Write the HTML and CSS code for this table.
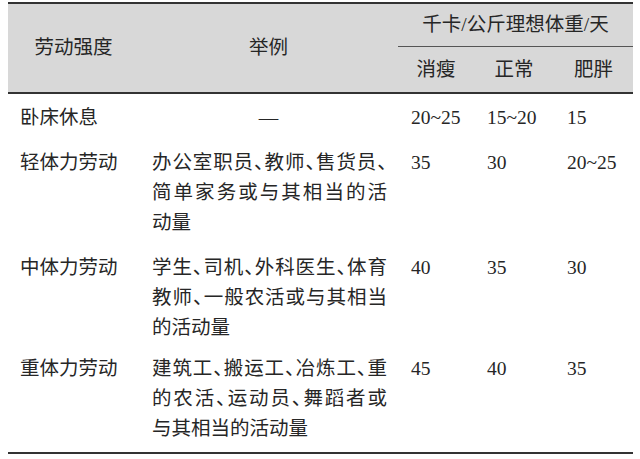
FILE: index.html
```html
<!DOCTYPE html>
<html lang="zh-CN">
<head>
<meta charset="utf-8">
<title>劳动强度与能量需要</title>
<link rel="stylesheet" href="styles.css">
</head>
<body>
<table class="energy">
  <colgroup>
    <col class="c-kind">
    <col class="c-ex">
    <col class="c-n1">
    <col class="c-n2">
    <col class="c-n3">
  </colgroup>
  <thead>
    <tr>
      <th rowspan="2" class="h-main">劳动强度</th>
      <th rowspan="2" class="h-main">举例</th>
      <th colspan="3" class="h-group">千卡/公斤理想体重/天</th>
    </tr>
    <tr>
      <th class="h-sub">消瘦</th>
      <th class="h-sub">正常</th>
      <th class="h-sub">肥胖</th>
    </tr>
  </thead>
  <tbody>
    <tr class="r-first">
      <td class="kind">卧床休息</td>
      <td class="ex dash">—</td>
      <td class="num">20~25</td>
      <td class="num">15~20</td>
      <td class="num">15</td>
    </tr>
    <tr>
      <td class="kind">轻体力劳动</td>
      <td class="ex">
        <span class="ln">办公室职员<span class="p">、</span>教师<span class="p">、</span>售货员<span class="p">、</span></span>
        <span class="ln">简单家务或与其相当的活</span>
        <span class="ln last">动量</span>
      </td>
      <td class="num">35</td>
      <td class="num">30</td>
      <td class="num">20~25</td>
    </tr>
    <tr class="r-third">
      <td class="kind">中体力劳动</td>
      <td class="ex">
        <span class="ln">学生<span class="p">、</span>司机<span class="p">、</span>外科医生<span class="p">、</span>体育</span>
        <span class="ln">教师<span class="p">、</span>一般农活或与其相当</span>
        <span class="ln last">的活动量</span>
      </td>
      <td class="num">40</td>
      <td class="num">35</td>
      <td class="num">30</td>
    </tr>
    <tr class="r-last">
      <td class="kind">重体力劳动</td>
      <td class="ex">
        <span class="ln">建筑工<span class="p">、</span>搬运工<span class="p">、</span>冶炼工<span class="p">、</span>重</span>
        <span class="ln">的农活<span class="p">、</span>运动员<span class="p">、</span>舞蹈者或</span>
        <span class="ln last">与其相当的活动量</span>
      </td>
      <td class="num">45</td>
      <td class="num">40</td>
      <td class="num">35</td>
    </tr>
  </tbody>
</table>
</body>
</html>
```

FILE: styles.css
```css
html, body {
  margin: 0;
  padding: 0;
  background: #ffffff;
}

body {
  font-family: "Liberation Serif", "Noto Sans CJK SC", serif;
  font-size: 19.5px;
  color: #262626;
}

.energy {
  margin: 2px 0 0 8px;
  width: 625px;
  table-layout: fixed;
  border-collapse: separate;
  border-spacing: 0;
  border-top: 2px solid #333333;
  border-bottom: 2px solid #333333;
}

.c-kind { width: 131px; }
.c-ex { width: 259px; }
.c-n1 { width: 76px; }
.c-n2 { width: 80px; }
.c-n3 { width: 79px; }

.energy th {
  background: #d8d8d8;
  font-weight: normal;
  text-align: center;
  padding: 0;
  line-height: 30px;
}

.h-main {
  height: 88px;
  border-bottom: 2px solid #333333;
  padding-top: 4px;
}

.h-group {
  height: 43px;
  padding-top: 2px;
  border-bottom: 1px solid #555555;
  box-sizing: border-box;
}

.h-sub {
  height: 44px;
  padding-top: 3px;
  border-bottom: 2px solid #333333;
}

.energy td {
  vertical-align: top;
  line-height: 30px;
  padding: 8px 0 7px 0;
}

.r-first td { padding-top: 9px; }
.r-third td { padding-bottom: 5px; }
.r-last td { padding-top: 6px; padding-bottom: 8px; }

.kind {
  padding-left: 12px !important;
  text-align: left;
}

.ex {
  padding-left: 13px !important;
  padding-right: 11px !important;
}

.dash {
  text-align: center;
  padding-left: 0 !important;
  padding-right: 0 !important;
}

.ln {
  display: block;
  text-align: justify;
  text-align-last: justify;
}

.ln.last {
  text-align: left;
  text-align-last: left;
}

.p {
  letter-spacing: -0.5em;
}

.num {
  padding-left: 13px !important;
  text-align: left;
}
```
